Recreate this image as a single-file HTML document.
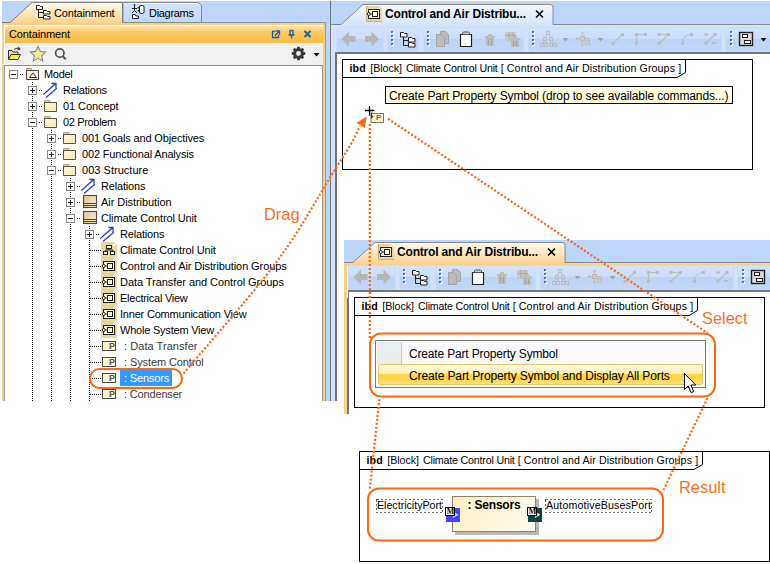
<!DOCTYPE html>
<html><head><meta charset="utf-8">
<style>
*{box-sizing:border-box;margin:0;padding:0}
html,body{width:770px;height:564px;overflow:hidden;background:#fff}
body{position:relative;font-family:"Liberation Sans",sans-serif;font-size:11px;color:#000}
.a{position:absolute}
.t{position:absolute;white-space:nowrap;line-height:16px;height:16px;font-size:11px}
.ui{font-family:"Liberation Sans",sans-serif}
.or{color:#f8701c;font-size:15px;line-height:18px;height:18px}
</style></head><body>
<!-- ============ LEFT PANEL ============ -->
<div class="a" style="left:2px;top:1px;width:328px;height:400px;background:#bcd6fb"></div>
<div class="a" style="left:330px;top:1px;width:1px;height:400px;background:#70767f"></div><div class="a" style="left:331px;top:1px;width:5px;height:400px;background:#d4e3fb"></div>
<div class="a" style="left:2px;top:22px;width:324px;height:1px;background:#8d9299"></div>
<!-- orange frame of containment panel -->
<div class="a" style="left:2px;top:23px;width:324px;height:378px;background:#f9cf86;border-right:1px solid #9a9a9a"></div>
<div class="a" style="left:4px;top:25px;width:319px;height:376px;background:#fff"></div>
<div class="a" style="left:5px;top:26px;width:318px;height:17px;background:linear-gradient(#fde6b6,#fbc965 35%,#fbc052 70%,#fabb48)"></div>
<div class="a" style="left:5px;top:43px;width:318px;height:22px;background:#f0f0f0"></div>
<div class="a" style="left:4px;top:65px;width:319px;height:336px;background:#fff;border-top:1px solid #8c8c8c;border-left:1px solid #9a9a9a;border-right:1px solid #9a9a9a"></div>
<svg class="a" style="left:0;top:0" width="340" height="70" viewBox="0 0 340 70">
<defs>
<linearGradient id="gt" x1="0" y1="0" x2="0" y2="1"><stop offset="0" stop-color="#fffaf0"/><stop offset="1" stop-color="#fbd48d"/></linearGradient>
<linearGradient id="gb" x1="0" y1="0" x2="0" y2="1"><stop offset="0" stop-color="#d2e3fc"/><stop offset="1" stop-color="#bfd8fb"/></linearGradient>
</defs>
<!-- diagrams tab -->
<path d="M123 22.500V2.500H198.500l3 3V22.500z" fill="url(#gb)" stroke="#8a8a8a"/><path d="M123.500 3.500l4 3M128 3.500H198" fill="none" stroke="#fff" stroke-width="1" opacity=".9"/>
<!-- containment tab -->
<path d="M2 22.5H10L32 2.5H122.5V23H2z" fill="url(#gt)"/>
<path d="M2 22.5H10L32 2.5H122.5V22.5" fill="none" stroke="#7f7f7f"/>
<!-- containment tab icon -->
<g fill="#fff" stroke="#222" stroke-width="1">
<path d="M36.500 5.500h3l1 1h2v3h-6zM43.500 10.500h3l1 1h2.500v2.500h-6.500zM43.500 15.500h3l1 1h2.500v2.500h-6.500z"/>
<path d="M38.500 9.500v8h5M38.500 12.500h5" fill="none"/>
</g>
<!-- diagrams tab icon -->
<g fill="none" stroke="#222" stroke-width="1">
<path d="M134.500 5.500v5M132 8.500h5M134.500 10.500l-2.500 2.500M134.500 10.500l2.500 2.500"/><circle cx="134.500" cy="4.800" r=".9" fill="#222" stroke="none"/>
<rect x="139.500" y="5.500" width="4.500" height="8" rx="1.500" fill="#fff"/>
<path d="M138.500 7v1.600M138.500 10v1.600" stroke-width="1.600"/>
<path d="M132.500 18.500v-4h2.500l1 1.500h2.500v2.500z" fill="#fff"/>
</g>
<!-- title icons -->
<g fill="none" stroke="#1f5fa8" stroke-width="1.300">
<path d="M275 31.500h-2.500v6h6V35M275.500 31h4v4M279 31.500l-4 4"/>
<path d="M289.500 30.500h4M290 31v4M293 31v4M288.500 35h6M291.500 35v3.500" stroke-width="1.400"/>
<path d="M304.500 31l6 6M310.500 31l-6 6" stroke-width="1.800"/>
</g>
<!-- toolbar icons -->
<g>
<path d="M8.500 59v-8.500h3.500l1 1.500h5v2.500" fill="#f3df5a" stroke="#333"/>
<path d="M8.500 59.500l2.500-5h9.500l-2.500 5z" fill="#f9ea4e" stroke="#333"/>
<path d="M14 49.500q3-2.500 6-.5M18 46.800l2.300 2.200-3 1" fill="none" stroke="#333" stroke-width="1"/>
<path d="M38 46.500l2.300 4.900 5.300.6-3.900 3.600 1 5.300-4.700-2.600-4.700 2.600 1-5.300-3.900-3.600 5.300-.6z" fill="#f4ee9a" stroke="#8a8a8a" stroke-width="1.100"/>
<circle cx="59.800" cy="53" r="4.200" fill="none" stroke="#555" stroke-width="1.700"/><path d="M62.800 56.200l3 3" stroke="#555" stroke-width="2"/>
</g>
<!-- gear -->
<g transform="translate(298.500,53.500)" fill="#3a3a3a">
<circle r="3.900" fill="none" stroke="#3a3a3a" stroke-width="3"/>
<g id="tooth"><rect x="-1.400" y="-6.700" width="2.800" height="2.500"/></g>
<use href="#tooth" transform="rotate(45)"/><use href="#tooth" transform="rotate(90)"/><use href="#tooth" transform="rotate(135)"/><use href="#tooth" transform="rotate(180)"/><use href="#tooth" transform="rotate(225)"/><use href="#tooth" transform="rotate(270)"/><use href="#tooth" transform="rotate(315)"/>
</g>
<path d="M313.500 53h6l-3 3.500z" fill="#111"/>
</svg>
<div class="t" style="left:54px;top:5px;letter-spacing:-0.17px">Containment</div>
<div class="t" style="left:149px;top:5px;letter-spacing:-0.3px">Diagrams</div>
<div class="t" style="left:9px;top:26px;letter-spacing:-0.12px">Containment</div>
<svg class="a" style="left:0;top:0" width="340" height="410" viewBox="0 0 340 410" shape-rendering="crispEdges"><defs><linearGradient id="pk" x1="0" y1="0" x2="1" y2="1"><stop offset="0" stop-color="#fefae4"/><stop offset="1" stop-color="#f7e9ae"/></linearGradient><linearGradient id="bk" x1="0" y1="0" x2="1" y2="0"><stop offset="0" stop-color="#dccb98"/><stop offset="1" stop-color="#f3e9c8"/></linearGradient></defs>
<path d="M32.5 82V401" stroke="#000" stroke-width="1" stroke-dasharray="1 1"/>
<path d="M51.5 130V401" stroke="#000" stroke-width="1" stroke-dasharray="1 1"/>
<path d="M70.5 178V401" stroke="#000" stroke-width="1" stroke-dasharray="1 1"/>
<path d="M89.5 226V401" stroke="#000" stroke-width="1" stroke-dasharray="1 1"/>
<rect x="9.5" y="70.5" width="8" height="8" fill="#fff" stroke="#8c8c8c"/>
<path d="M11 74.5h5" stroke="#222"/>
<path d="M20 74.5H24" stroke="#000" stroke-width="1" stroke-dasharray="1 1"/>
<g transform="translate(24,66)" shape-rendering="geometricPrecision"><path d="M2.500 4.500v-2h5v2z" fill="#f1c88e" stroke="#b89868" stroke-width="1"/><path d="M2.500 4.500h12v9h-12z" fill="#fdf5d2" stroke="#444" stroke-width="1"/><path d="M5.500 11.500l3.500-4.500 3.500 4.500z" fill="#fff" stroke="#333" stroke-width="1"/></g>
<rect x="28.5" y="86.5" width="8" height="8" fill="#fff" stroke="#8c8c8c"/>
<path d="M30 90.5h5" stroke="#222"/>
<path d="M32.5 88v5" stroke="#222"/>
<path d="M39 90.5H43" stroke="#000" stroke-width="1" stroke-dasharray="1 1"/>
<g transform="translate(43,82)" shape-rendering="geometricPrecision" stroke="#2a40c4" stroke-width="1.300" fill="none"><path d="M0.300 12.500L12.800 1.500M3 15.600L13.800 6.300M8.300 1.500h4.700v4.700"/></g>
<rect x="28.5" y="102.5" width="8" height="8" fill="#fff" stroke="#8c8c8c"/>
<path d="M30 106.5h5" stroke="#222"/>
<path d="M32.5 104v5" stroke="#222"/>
<path d="M39 106.5H43" stroke="#000" stroke-width="1" stroke-dasharray="1 1"/>
<g transform="translate(43,98)" shape-rendering="geometricPrecision"><path d="M1.500 4.500v-2h5.500v2z" fill="#f1c88e" stroke="#c0a070" stroke-width="1"/><path d="M1.500 4.500h12v9h-12z" fill="url(#pk)" stroke="#55554a" stroke-width="1"/></g>
<rect x="28.5" y="118.5" width="8" height="8" fill="#fff" stroke="#8c8c8c"/>
<path d="M30 122.5h5" stroke="#222"/>
<path d="M39 122.5H43" stroke="#000" stroke-width="1" stroke-dasharray="1 1"/>
<g transform="translate(43,114)" shape-rendering="geometricPrecision"><path d="M1.500 4.500v-2h5.500v2z" fill="#f1c88e" stroke="#c0a070" stroke-width="1"/><path d="M1.500 4.500h12v9h-12z" fill="url(#pk)" stroke="#55554a" stroke-width="1"/></g>
<rect x="47.5" y="134.5" width="8" height="8" fill="#fff" stroke="#8c8c8c"/>
<path d="M49 138.5h5" stroke="#222"/>
<path d="M51.5 136v5" stroke="#222"/>
<path d="M58 138.5H62" stroke="#000" stroke-width="1" stroke-dasharray="1 1"/>
<g transform="translate(62,130)" shape-rendering="geometricPrecision"><path d="M1.500 4.500v-2h5.500v2z" fill="#f1c88e" stroke="#c0a070" stroke-width="1"/><path d="M1.500 4.500h12v9h-12z" fill="url(#pk)" stroke="#55554a" stroke-width="1"/></g>
<rect x="47.5" y="150.5" width="8" height="8" fill="#fff" stroke="#8c8c8c"/>
<path d="M49 154.5h5" stroke="#222"/>
<path d="M51.5 152v5" stroke="#222"/>
<path d="M58 154.5H62" stroke="#000" stroke-width="1" stroke-dasharray="1 1"/>
<g transform="translate(62,146)" shape-rendering="geometricPrecision"><path d="M1.500 4.500v-2h5.500v2z" fill="#f1c88e" stroke="#c0a070" stroke-width="1"/><path d="M1.500 4.500h12v9h-12z" fill="url(#pk)" stroke="#55554a" stroke-width="1"/></g>
<rect x="47.5" y="166.5" width="8" height="8" fill="#fff" stroke="#8c8c8c"/>
<path d="M49 170.5h5" stroke="#222"/>
<path d="M58 170.5H62" stroke="#000" stroke-width="1" stroke-dasharray="1 1"/>
<g transform="translate(62,162)" shape-rendering="geometricPrecision"><path d="M1.500 4.500v-2h5.500v2z" fill="#f1c88e" stroke="#c0a070" stroke-width="1"/><path d="M1.500 4.500h12v9h-12z" fill="url(#pk)" stroke="#55554a" stroke-width="1"/></g>
<rect x="66.5" y="182.5" width="8" height="8" fill="#fff" stroke="#8c8c8c"/>
<path d="M68 186.5h5" stroke="#222"/>
<path d="M70.5 184v5" stroke="#222"/>
<path d="M77 186.5H81" stroke="#000" stroke-width="1" stroke-dasharray="1 1"/>
<g transform="translate(81,178)" shape-rendering="geometricPrecision" stroke="#2a40c4" stroke-width="1.300" fill="none"><path d="M0.300 12.500L12.800 1.500M3 15.600L13.800 6.300M8.300 1.500h4.700v4.700"/></g>
<rect x="66.5" y="198.5" width="8" height="8" fill="#fff" stroke="#8c8c8c"/>
<path d="M68 202.5h5" stroke="#222"/>
<path d="M70.5 200v5" stroke="#222"/>
<path d="M77 202.5H81" stroke="#000" stroke-width="1" stroke-dasharray="1 1"/>
<g transform="translate(82,194)" shape-rendering="geometricPrecision"><rect x="1.500" y="1.500" width="13" height="12" fill="url(#bk)" stroke="#4f4f48" stroke-width="1.200"/><path d="M2 9.500h12M2 11.500h12" stroke="#4f4f48" stroke-width="1"/></g>
<rect x="66.5" y="214.5" width="8" height="8" fill="#fff" stroke="#8c8c8c"/>
<path d="M68 218.5h5" stroke="#222"/>
<path d="M77 218.5H81" stroke="#000" stroke-width="1" stroke-dasharray="1 1"/>
<g transform="translate(82,210)" shape-rendering="geometricPrecision"><rect x="1.500" y="1.500" width="13" height="12" fill="url(#bk)" stroke="#4f4f48" stroke-width="1.200"/><path d="M2 9.500h12M2 11.500h12" stroke="#4f4f48" stroke-width="1"/></g>
<rect x="85.5" y="230.5" width="8" height="8" fill="#fff" stroke="#8c8c8c"/>
<path d="M87 234.5h5" stroke="#222"/>
<path d="M89.5 232v5" stroke="#222"/>
<path d="M96 234.5H100" stroke="#000" stroke-width="1" stroke-dasharray="1 1"/>
<g transform="translate(100,226)" shape-rendering="geometricPrecision" stroke="#2a40c4" stroke-width="1.300" fill="none"><path d="M0.300 12.500L12.800 1.500M3 15.600L13.800 6.300M8.300 1.500h4.700v4.700"/></g>
<path d="M90 250.5H102" stroke="#000" stroke-width="1" stroke-dasharray="1 1"/>
<g transform="translate(101,242)" shape-rendering="geometricPrecision"><path d="M0 0h12l4 4v12h-16z" fill="#e6d6a0"/><path d="M12 0v4h4z" fill="#fff"/><path d="M12 0l4 4" stroke="#c9b98a" stroke-width=".8"/><g fill="#fdf8dc" stroke="#222" stroke-width="1"><rect x="5.500" y="3.500" width="5" height="3"/><rect x="2.500" y="9.500" width="4" height="3"/><rect x="9.500" y="9.500" width="4" height="3"/></g><path d="M8 6.500v1.500M4.500 9.500v-1.500h7v1.500" stroke="#222" fill="none"/></g>
<path d="M90 266.5H102" stroke="#000" stroke-width="1" stroke-dasharray="1 1"/>
<g transform="translate(101,258)" shape-rendering="geometricPrecision"><path d="M0 0h12l4 4v12h-16z" fill="#e6d6a0"/><path d="M12 0v4h4z" fill="#fff"/><path d="M12 0l4 4" stroke="#c9b98a" stroke-width=".8"/><rect x="2.500" y="3.500" width="11" height="9" fill="#fdf6c8" stroke="#222"/><rect x="6.500" y="5.500" width="5" height="5" fill="#fff" stroke="#222"/><circle cx="2.800" cy="8" r="1.500" fill="#fff" stroke="#222"/><path d="M4.300 8h2.200" stroke="#222"/></g>
<path d="M90 282.5H102" stroke="#000" stroke-width="1" stroke-dasharray="1 1"/>
<g transform="translate(101,274)" shape-rendering="geometricPrecision"><path d="M0 0h12l4 4v12h-16z" fill="#e6d6a0"/><path d="M12 0v4h4z" fill="#fff"/><path d="M12 0l4 4" stroke="#c9b98a" stroke-width=".8"/><rect x="2.500" y="3.500" width="11" height="9" fill="#fdf6c8" stroke="#222"/><rect x="6.500" y="5.500" width="5" height="5" fill="#fff" stroke="#222"/><circle cx="2.800" cy="8" r="1.500" fill="#fff" stroke="#222"/><path d="M4.300 8h2.200" stroke="#222"/></g>
<path d="M90 298.5H102" stroke="#000" stroke-width="1" stroke-dasharray="1 1"/>
<g transform="translate(101,290)" shape-rendering="geometricPrecision"><path d="M0 0h12l4 4v12h-16z" fill="#e6d6a0"/><path d="M12 0v4h4z" fill="#fff"/><path d="M12 0l4 4" stroke="#c9b98a" stroke-width=".8"/><rect x="2.500" y="3.500" width="11" height="9" fill="#fdf6c8" stroke="#222"/><rect x="6.500" y="5.500" width="5" height="5" fill="#fff" stroke="#222"/><circle cx="2.800" cy="8" r="1.500" fill="#fff" stroke="#222"/><path d="M4.300 8h2.200" stroke="#222"/></g>
<path d="M90 314.5H102" stroke="#000" stroke-width="1" stroke-dasharray="1 1"/>
<g transform="translate(101,306)" shape-rendering="geometricPrecision"><path d="M0 0h12l4 4v12h-16z" fill="#e6d6a0"/><path d="M12 0v4h4z" fill="#fff"/><path d="M12 0l4 4" stroke="#c9b98a" stroke-width=".8"/><rect x="2.500" y="3.500" width="11" height="9" fill="#fdf6c8" stroke="#222"/><rect x="6.500" y="5.500" width="5" height="5" fill="#fff" stroke="#222"/><circle cx="2.800" cy="8" r="1.500" fill="#fff" stroke="#222"/><path d="M4.300 8h2.200" stroke="#222"/></g>
<path d="M90 330.5H102" stroke="#000" stroke-width="1" stroke-dasharray="1 1"/>
<g transform="translate(101,322)" shape-rendering="geometricPrecision"><path d="M0 0h12l4 4v12h-16z" fill="#e6d6a0"/><path d="M12 0v4h4z" fill="#fff"/><path d="M12 0l4 4" stroke="#c9b98a" stroke-width=".8"/><rect x="2.500" y="3.500" width="11" height="9" fill="#fdf6c8" stroke="#222"/><rect x="6.500" y="5.500" width="5" height="5" fill="#fff" stroke="#222"/><circle cx="2.800" cy="8" r="1.500" fill="#fff" stroke="#222"/><path d="M4.300 8h2.200" stroke="#222"/></g>
<path d="M90 346.5H102" stroke="#000" stroke-width="1" stroke-dasharray="1 1"/>
<g transform="translate(100,338)" shape-rendering="geometricPrecision"><rect x="2.500" y="3.500" width="13" height="9" fill="#fdf6d0" stroke="#4a4a42"/></g>
<path d="M90 362.5H102" stroke="#000" stroke-width="1" stroke-dasharray="1 1"/>
<g transform="translate(100,354)" shape-rendering="geometricPrecision"><rect x="2.500" y="3.500" width="13" height="9" fill="#fdf6d0" stroke="#4a4a42"/></g>
<path d="M90 378.5H102" stroke="#000" stroke-width="1" stroke-dasharray="1 1"/>
<g transform="translate(100,370)" shape-rendering="geometricPrecision"><rect x="2.500" y="3.500" width="13" height="9" fill="#fdf6d0" stroke="#4a4a42"/></g>
<path d="M90 394.5H102" stroke="#000" stroke-width="1" stroke-dasharray="1 1"/>
<g transform="translate(100,386)" shape-rendering="geometricPrecision"><rect x="2.500" y="3.500" width="13" height="9" fill="#fdf6d0" stroke="#4a4a42"/></g>
</svg>
<div class="t" style="left:44px;top:66px;letter-spacing:-0.292px">Model</div>
<div class="t" style="left:63px;top:82px;letter-spacing:-0.22px">Relations</div>
<div class="t" style="left:63px;top:98px;letter-spacing:-0.085px">01 Concept</div>
<div class="t" style="left:63px;top:114px;letter-spacing:-0.341px">02 Problem</div>
<div class="t" style="left:82px;top:130px;letter-spacing:-0.16px">001 Goals and Objectives</div>
<div class="t" style="left:82px;top:146px;letter-spacing:-0.158px">002 Functional Analysis</div>
<div class="t" style="left:82px;top:162px;letter-spacing:0.029px">003 Structure</div>
<div class="t" style="left:101px;top:178px;letter-spacing:-0.182px">Relations</div>
<div class="t" style="left:101px;top:194px;letter-spacing:-0.062px">Air Distribution</div>
<div class="t" style="left:101px;top:210px;letter-spacing:-0.138px">Climate Control Unit</div>
<div class="t" style="left:120px;top:226px;letter-spacing:-0.182px">Relations</div>
<div class="t" style="left:120px;top:242px;letter-spacing:-0.138px">Climate Control Unit</div>
<div class="t" style="left:120px;top:258px;letter-spacing:-0.096px">Control and Air Distribution Groups</div>
<div class="t" style="left:120px;top:274px;letter-spacing:-0.058px">Data Transfer and Control Groups</div>
<div class="t" style="left:120px;top:290px;letter-spacing:-0.252px">Electrical View</div>
<div class="t" style="left:120px;top:306px;letter-spacing:-0.198px">Inner Communication View</div>
<div class="t" style="left:120px;top:322px;letter-spacing:-0.213px">Whole System View</div>
<div class="t" style="left:109px;top:338px;font-size:9px;font-weight:bold;color:#555">P</div>
<div class="t" style="left:124px;top:338px;color:#3a3a3a;letter-spacing:0.052px">: Data Transfer</div>
<div class="t" style="left:109px;top:354px;font-size:9px;font-weight:bold;color:#555">P</div>
<div class="t" style="left:124px;top:354px;color:#3a3a3a;letter-spacing:-0.101px">: System Control</div>
<div class="t" style="left:109px;top:370px;font-size:9px;font-weight:bold;color:#555">P</div>
<div class="t" style="left:120px;top:374px;width:52px;height:16px;line-height:16px;margin-top:-4px;background:#3399ff;color:#fff;padding-left:4px;letter-spacing:-0.146px">: Sensors</div>
<div class="t" style="left:109px;top:386px;font-size:9px;font-weight:bold;color:#555">P</div>
<div class="t" style="left:124px;top:386px;color:#3a3a3a;letter-spacing:-0.164px">: Condenser</div>
<!-- ============ WINDOW 1 ============ -->
<div class="a" style="left:335px;top:52px;width:435px;height:349px;border-left:2px solid #73737b;background:#fff"></div>
<svg class="a" style="left:0px;top:0px" width="770" height="60" viewBox="0 0 770 60">
<defs><linearGradient id="tbga" x1="0" y1="0" x2="0" y2="1"><stop offset="0" stop-color="#d3e3fb"/><stop offset=".48" stop-color="#cbddf9"/><stop offset=".5" stop-color="#bdd3f5"/><stop offset="1" stop-color="#c3d8f8"/></linearGradient>
<linearGradient id="taba" x1="0" y1="0" x2="0" y2="1"><stop offset="0" stop-color="#f4f8fe"/><stop offset="1" stop-color="#d3e2fb"/></linearGradient>
</defs>
<rect x="331" y="1" width="770" height="24" fill="#bcd6fb"/>
<rect x="331" y="24" width="770" height="3" fill="#d3e2fb"/>
<rect x="331" y="26" width="770" height="26" fill="#d3e2fb"/>
<path d="M331 24.500H341L363 4.500H550q3 0 3 3V24.500H770V26H331z" fill="url(#taba)"/>
<path d="M331 24.500H341L363 4.500H550q3 0 3 3V24.500H770" fill="none" stroke="#8a8a8a"/>
<rect x="336.5" y="27.500" width="47" height="24" rx="2" fill="url(#tbga)" stroke="#c9dcfb" stroke-width="1"/>
<rect x="387.5" y="27.500" width="31" height="24" rx="2" fill="url(#tbga)" stroke="#c9dcfb" stroke-width="1"/>
<rect x="423.5" y="27.500" width="100" height="24" rx="2" fill="url(#tbga)" stroke="#c9dcfb" stroke-width="1"/>
<rect x="528.5" y="27.500" width="193" height="24" rx="2" fill="url(#tbga)" stroke="#c9dcfb" stroke-width="1"/>
<rect x="725.5" y="27.500" width="55" height="24" rx="2" fill="url(#tbga)" stroke="#c9dcfb" stroke-width="1"/>
<path d="M341.500 39l7.500-7.500v4.500h6.500v6h-6.500v4.500z" fill="#b6b6b6"/><path d="M379 39l-7.500-7.500v4.500h-6.500v6h6.500v4.500z" fill="#b6b6b6"/><rect x="391" y="31" width="2" height="2" fill="#3f74c8"/><rect x="392" y="32" width="2" height="2" fill="#fff" opacity=".9"/><rect x="391" y="31" width="2" height="2" fill="#3f74c8" opacity=".85"/><rect x="391" y="35" width="2" height="2" fill="#3f74c8"/><rect x="392" y="36" width="2" height="2" fill="#fff" opacity=".9"/><rect x="391" y="35" width="2" height="2" fill="#3f74c8" opacity=".85"/><rect x="391" y="39" width="2" height="2" fill="#3f74c8"/><rect x="392" y="40" width="2" height="2" fill="#fff" opacity=".9"/><rect x="391" y="39" width="2" height="2" fill="#3f74c8" opacity=".85"/><rect x="391" y="43" width="2" height="2" fill="#3f74c8"/><rect x="392" y="44" width="2" height="2" fill="#fff" opacity=".9"/><rect x="391" y="43" width="2" height="2" fill="#3f74c8" opacity=".85"/><g fill="#fff" stroke="#222" stroke-width="1"><path d="M400.500 32.500h3l1 1h2.500v3.500h-6.500zM408.500 37.500h3l1 1h2.500v3.500h-6.500zM408.500 42.500h3l1 1h2.500v3.500h-6.500z"/><path d="M403.500 37v8.500h5M403.500 40.500h5" fill="none"/></g><rect x="427" y="31" width="2" height="2" fill="#3f74c8"/><rect x="428" y="32" width="2" height="2" fill="#fff" opacity=".9"/><rect x="427" y="31" width="2" height="2" fill="#3f74c8" opacity=".85"/><rect x="427" y="35" width="2" height="2" fill="#3f74c8"/><rect x="428" y="36" width="2" height="2" fill="#fff" opacity=".9"/><rect x="427" y="35" width="2" height="2" fill="#3f74c8" opacity=".85"/><rect x="427" y="39" width="2" height="2" fill="#3f74c8"/><rect x="428" y="40" width="2" height="2" fill="#fff" opacity=".9"/><rect x="427" y="39" width="2" height="2" fill="#3f74c8" opacity=".85"/><rect x="427" y="43" width="2" height="2" fill="#3f74c8"/><rect x="428" y="44" width="2" height="2" fill="#fff" opacity=".9"/><rect x="427" y="43" width="2" height="2" fill="#3f74c8" opacity=".85"/><g fill="#bcbcbc" stroke="#a5a5a5" stroke-width="1"><path d="M440.500 31.500h5l3 3v9h-8z"/><path d="M436.500 34.500h5l3 3v9h-8z"/></g><path d="M460.500 34.500h11v12h-11z" fill="#fff" stroke="#222" stroke-width="1.200"/><path d="M462.500 34.500v-1.500l1-1h5l1 1v1.500z" fill="#c9c9e6" stroke="#555" stroke-width="1"/><path d="M485 36h10v2h-1v8h-8v-8h-1zM488 34h4v2h-4z" fill="#bcbcbc"/><path d="M488.500 39v6M491.500 39v6" stroke="#a0a0a0"/><path d="M505 32h11v9h-11z" fill="#c8c8c8"/><path d="M505 35.500h11M509 32v9M513 32v9" stroke="#aaa" stroke-width="1"/><path d="M510 38h10v2h-1v7h-8v-7h-1zM513 36h4v2h-4z" fill="#bcbcbc"/><path d="M513.500 41v5M516.500 41v5" stroke="#a0a0a0"/><rect x="532" y="31" width="2" height="2" fill="#3f74c8"/><rect x="533" y="32" width="2" height="2" fill="#fff" opacity=".9"/><rect x="532" y="31" width="2" height="2" fill="#3f74c8" opacity=".85"/><rect x="532" y="35" width="2" height="2" fill="#3f74c8"/><rect x="533" y="36" width="2" height="2" fill="#fff" opacity=".9"/><rect x="532" y="35" width="2" height="2" fill="#3f74c8" opacity=".85"/><rect x="532" y="39" width="2" height="2" fill="#3f74c8"/><rect x="533" y="40" width="2" height="2" fill="#fff" opacity=".9"/><rect x="532" y="39" width="2" height="2" fill="#3f74c8" opacity=".85"/><rect x="532" y="43" width="2" height="2" fill="#3f74c8"/><rect x="533" y="44" width="2" height="2" fill="#fff" opacity=".9"/><rect x="532" y="43" width="2" height="2" fill="#3f74c8" opacity=".85"/><g fill="none" stroke="#bcbcbc" stroke-width="1"><rect x="546.500" y="31.500" width="3" height="3"/><rect x="543.500" y="37.500" width="3" height="3"/><rect x="549.500" y="37.500" width="3" height="3"/><rect x="540.500" y="43.500" width="3" height="3"/><rect x="544.500" y="43.500" width="3" height="3"/><rect x="549.500" y="43.500" width="3" height="3"/><rect x="553.500" y="43.500" width="3" height="3"/><path d="M547 34.500l-2 3M549 34.500l2 3M544 40.500l-2 3M546 40.500v3M550.500 40.500v3M552 40.500l2.500 3"/></g><path d="M562.500 38h6l-3 3.500z" fill="#a8a39c"/><g fill="none" stroke="#bcbcbc" stroke-width="1"><path d="M582.500 32v14M576 38.500h14M581 33.500l1.500-1.500 1.500 1.500M581 44.500l1.500 1.500 1.500-1.500M577.500 37l-1.500 1.500 1.500 1.500"/><rect x="580.500" y="36.500" width="4" height="4" fill="#cfcfcf"/><rect x="585.500" y="40.500" width="4" height="4" fill="#cfcfcf"/></g><path d="M597.500 38h6l-3 3.500z" fill="#a8a39c"/><path d="M613 43.500L622.500 34.500" fill="none" stroke="#bcbcbc" stroke-width="1.200"/><rect x="611.5" y="42" width="3" height="3" fill="#bcbcbc" stroke="none"/><rect x="621" y="33" width="3" height="3" fill="#bcbcbc" stroke="none"/><path d="M636.500 43.500V34.500H645.500" fill="none" stroke="#bcbcbc" stroke-width="1.200"/><rect x="635" y="42" width="3" height="3" fill="#bcbcbc" stroke="none"/><rect x="635" y="33" width="3" height="3" fill="#bcbcbc" stroke="none"/><rect x="644" y="33" width="3" height="3" fill="#bcbcbc" stroke="none"/><path d="M659 34.500H668.500L659 43.500" fill="none" stroke="#bcbcbc" stroke-width="1.200"/><rect x="657.5" y="33" width="3" height="3" fill="#bcbcbc" stroke="none"/><rect x="667" y="33" width="3" height="3" fill="#bcbcbc" stroke="none"/><rect x="657.5" y="42" width="3" height="3" fill="#bcbcbc" stroke="none"/><path d="M682.500 43.500C682.500 38 686 34.500 691.500 34.500" fill="none" stroke="#bcbcbc" stroke-width="1.200"/><rect x="681" y="42" width="3" height="3" fill="#bcbcbc" stroke="none"/><rect x="690" y="33" width="3" height="3" fill="#bcbcbc" stroke="none"/><g fill="#bcbcbc" stroke="#bcbcbc" stroke-width="1.200"><path d="M706 43l9-8.700" fill="none"/><rect x="713.500" y="33" width="3" height="3" stroke="none"/><rect x="704.500" y="41.500" width="3" height="3" stroke="none"/><rect x="704" y="33.500" width="4" height="2" stroke="none"/><rect x="712" y="42" width="4" height="2" stroke="none"/></g><rect x="730" y="31" width="2" height="2" fill="#3f74c8"/><rect x="731" y="32" width="2" height="2" fill="#fff" opacity=".9"/><rect x="730" y="31" width="2" height="2" fill="#3f74c8" opacity=".85"/><rect x="730" y="35" width="2" height="2" fill="#3f74c8"/><rect x="731" y="36" width="2" height="2" fill="#fff" opacity=".9"/><rect x="730" y="35" width="2" height="2" fill="#3f74c8" opacity=".85"/><rect x="730" y="39" width="2" height="2" fill="#3f74c8"/><rect x="731" y="40" width="2" height="2" fill="#fff" opacity=".9"/><rect x="730" y="39" width="2" height="2" fill="#3f74c8" opacity=".85"/><rect x="730" y="43" width="2" height="2" fill="#3f74c8"/><rect x="731" y="44" width="2" height="2" fill="#fff" opacity=".9"/><rect x="730" y="43" width="2" height="2" fill="#3f74c8" opacity=".85"/><rect x="739.500" y="32.500" width="13" height="13" fill="#d8d8d8" stroke="#222" stroke-width="1.400"/><rect x="742.500" y="34.500" width="5" height="3" fill="#fff" stroke="#222"/><rect x="744.500" y="40.500" width="6" height="3" fill="#fff" stroke="#222"/><path d="M760.500 38h6l-3 3.500z" fill="#111"/>
<g transform="translate(366,6)"><path d="M0 0h12l4 4v12h-16z" fill="#e6d6a0"/><path d="M12 0v4h4z" fill="#fff"/><path d="M12 0l4 4" stroke="#c9b98a" stroke-width=".8"/><path d="M.5 0v15.500h15.500" fill="none" stroke="#c4b27e"/><rect x="2.500" y="3.500" width="11" height="9" fill="#fdf6c8" stroke="#222"/><rect x="6.500" y="5.500" width="5" height="5" fill="#fff" stroke="#222"/><circle cx="2.800" cy="8" r="1.500" fill="#fff" stroke="#222"/><path d="M4.300 8h2.200" stroke="#222"/></g>
<path d="M536 10.500l7 7M543 10.500l-7 7" stroke="#111" stroke-width="1.700"/>
<rect x="335" y="52" width="770" height="2" fill="#73737b"/>
</svg>
<div class="t" style="left:385px;top:6px;font-size:12px;font-weight:bold;letter-spacing:-0.175px">Control and Air Distribu...</div>
<div class="a" style="left:342px;top:59px;width:411px;height:111px;border:1px solid #000"></div>
<svg class="a" style="left:342px;top:59px" width="345" height="20" viewBox="0 0 345 20"><path d="M0 18.500H335L343.5 13.500V0" fill="none" stroke="#000"/></svg>
<div class="t" style="left:349.5px;top:60px;font-size:10.670px;letter-spacing:0.108px"><b>ibd</b></div>
<div class="t" style="left:370.3px;top:60px;font-size:10.670px;letter-spacing:-0.064px">[Block]</div>
<div class="t" style="left:406px;top:60px;font-size:10.670px;letter-spacing:-0.187px">Climate Control Unit</div>
<div class="t" style="left:500.7px;top:60px;font-size:10.670px;letter-spacing:0.103px">[ Control and Air Distribution Groups ]</div>
<div class="a" style="left:385px;top:86px;width:348px;height:18px;background:#ffffe1;border:1px solid #000"></div>
<div class="t" style="left:389px;top:88px;font-size:12px;letter-spacing:-0.13px">Create Part Property Symbol (drop to see available commands...)</div>
<!-- ============ WINDOW 2 ============ -->
<div class="a" style="left:344px;top:240px;width:426px;height:174px;background:#fff"></div>
<div class="a" style="left:344px;top:263px;width:3px;height:151px;background:#f9cf86"></div>
<div class="a" style="left:347px;top:290px;width:2px;height:124px;background:#73737b"></div>
<svg class="a" style="left:12px;top:238px" width="758" height="60" viewBox="0 0 758 60">
<defs><linearGradient id="tbgb" x1="0" y1="0" x2="0" y2="1"><stop offset="0" stop-color="#d3e3fb"/><stop offset=".48" stop-color="#cbddf9"/><stop offset=".5" stop-color="#bdd3f5"/><stop offset="1" stop-color="#c3d8f8"/></linearGradient>
<linearGradient id="tabb" x1="0" y1="0" x2="0" y2="1"><stop offset="0" stop-color="#fffaf0"/><stop offset="1" stop-color="#fbd490"/></linearGradient>
</defs>
<rect x="332" y="2" width="770" height="24" fill="#bcd6fb"/>
<rect x="332" y="24" width="770" height="3" fill="#fbd08a"/>
<rect x="332" y="27" width="770" height="26" fill="#d3e2fb"/>
<path d="M332 24.500H341L363 4.500H550q3 0 3 3V24.500H770V26H332z" fill="url(#tabb)"/>
<path d="M332 24.500H341L363 4.500H550q3 0 3 3V24.500H770" fill="none" stroke="#8a8a8a"/>
<rect x="332" y="25" width="3" height="35" fill="#f9cf86"/><rect x="335" y="28" width="1" height="32" fill="#fff"/>
<rect x="336.5" y="27.500" width="47" height="24" rx="2" fill="url(#tbgb)" stroke="#c9dcfb" stroke-width="1"/>
<rect x="387.5" y="27.500" width="31" height="24" rx="2" fill="url(#tbgb)" stroke="#c9dcfb" stroke-width="1"/>
<rect x="423.5" y="27.500" width="100" height="24" rx="2" fill="url(#tbgb)" stroke="#c9dcfb" stroke-width="1"/>
<rect x="528.5" y="27.500" width="193" height="24" rx="2" fill="url(#tbgb)" stroke="#c9dcfb" stroke-width="1"/>
<rect x="725.5" y="27.500" width="55" height="24" rx="2" fill="url(#tbgb)" stroke="#c9dcfb" stroke-width="1"/>
<path d="M341.500 39l7.500-7.500v4.500h6.500v6h-6.500v4.500z" fill="#b6b6b6"/><path d="M379 39l-7.500-7.500v4.500h-6.500v6h6.500v4.500z" fill="#b6b6b6"/><rect x="391" y="31" width="2" height="2" fill="#3f74c8"/><rect x="392" y="32" width="2" height="2" fill="#fff" opacity=".9"/><rect x="391" y="31" width="2" height="2" fill="#3f74c8" opacity=".85"/><rect x="391" y="35" width="2" height="2" fill="#3f74c8"/><rect x="392" y="36" width="2" height="2" fill="#fff" opacity=".9"/><rect x="391" y="35" width="2" height="2" fill="#3f74c8" opacity=".85"/><rect x="391" y="39" width="2" height="2" fill="#3f74c8"/><rect x="392" y="40" width="2" height="2" fill="#fff" opacity=".9"/><rect x="391" y="39" width="2" height="2" fill="#3f74c8" opacity=".85"/><rect x="391" y="43" width="2" height="2" fill="#3f74c8"/><rect x="392" y="44" width="2" height="2" fill="#fff" opacity=".9"/><rect x="391" y="43" width="2" height="2" fill="#3f74c8" opacity=".85"/><g fill="#fff" stroke="#222" stroke-width="1"><path d="M400.500 32.500h3l1 1h2.500v3.500h-6.500zM408.500 37.500h3l1 1h2.500v3.500h-6.500zM408.500 42.500h3l1 1h2.500v3.500h-6.500z"/><path d="M403.500 37v8.500h5M403.500 40.500h5" fill="none"/></g><rect x="427" y="31" width="2" height="2" fill="#3f74c8"/><rect x="428" y="32" width="2" height="2" fill="#fff" opacity=".9"/><rect x="427" y="31" width="2" height="2" fill="#3f74c8" opacity=".85"/><rect x="427" y="35" width="2" height="2" fill="#3f74c8"/><rect x="428" y="36" width="2" height="2" fill="#fff" opacity=".9"/><rect x="427" y="35" width="2" height="2" fill="#3f74c8" opacity=".85"/><rect x="427" y="39" width="2" height="2" fill="#3f74c8"/><rect x="428" y="40" width="2" height="2" fill="#fff" opacity=".9"/><rect x="427" y="39" width="2" height="2" fill="#3f74c8" opacity=".85"/><rect x="427" y="43" width="2" height="2" fill="#3f74c8"/><rect x="428" y="44" width="2" height="2" fill="#fff" opacity=".9"/><rect x="427" y="43" width="2" height="2" fill="#3f74c8" opacity=".85"/><g fill="#bcbcbc" stroke="#a5a5a5" stroke-width="1"><path d="M440.500 31.500h5l3 3v9h-8z"/><path d="M436.500 34.500h5l3 3v9h-8z"/></g><path d="M460.500 34.500h11v12h-11z" fill="#fff" stroke="#222" stroke-width="1.200"/><path d="M462.500 34.500v-1.500l1-1h5l1 1v1.500z" fill="#c9c9e6" stroke="#555" stroke-width="1"/><path d="M485 36h10v2h-1v8h-8v-8h-1zM488 34h4v2h-4z" fill="#bcbcbc"/><path d="M488.500 39v6M491.500 39v6" stroke="#a0a0a0"/><path d="M505 32h11v9h-11z" fill="#c8c8c8"/><path d="M505 35.500h11M509 32v9M513 32v9" stroke="#aaa" stroke-width="1"/><path d="M510 38h10v2h-1v7h-8v-7h-1zM513 36h4v2h-4z" fill="#bcbcbc"/><path d="M513.500 41v5M516.500 41v5" stroke="#a0a0a0"/><rect x="532" y="31" width="2" height="2" fill="#3f74c8"/><rect x="533" y="32" width="2" height="2" fill="#fff" opacity=".9"/><rect x="532" y="31" width="2" height="2" fill="#3f74c8" opacity=".85"/><rect x="532" y="35" width="2" height="2" fill="#3f74c8"/><rect x="533" y="36" width="2" height="2" fill="#fff" opacity=".9"/><rect x="532" y="35" width="2" height="2" fill="#3f74c8" opacity=".85"/><rect x="532" y="39" width="2" height="2" fill="#3f74c8"/><rect x="533" y="40" width="2" height="2" fill="#fff" opacity=".9"/><rect x="532" y="39" width="2" height="2" fill="#3f74c8" opacity=".85"/><rect x="532" y="43" width="2" height="2" fill="#3f74c8"/><rect x="533" y="44" width="2" height="2" fill="#fff" opacity=".9"/><rect x="532" y="43" width="2" height="2" fill="#3f74c8" opacity=".85"/><g fill="none" stroke="#bcbcbc" stroke-width="1"><rect x="546.500" y="31.500" width="3" height="3"/><rect x="543.500" y="37.500" width="3" height="3"/><rect x="549.500" y="37.500" width="3" height="3"/><rect x="540.500" y="43.500" width="3" height="3"/><rect x="544.500" y="43.500" width="3" height="3"/><rect x="549.500" y="43.500" width="3" height="3"/><rect x="553.500" y="43.500" width="3" height="3"/><path d="M547 34.500l-2 3M549 34.500l2 3M544 40.500l-2 3M546 40.500v3M550.500 40.500v3M552 40.500l2.500 3"/></g><path d="M562.500 38h6l-3 3.500z" fill="#a8a39c"/><g fill="none" stroke="#bcbcbc" stroke-width="1"><path d="M582.500 32v14M576 38.500h14M581 33.500l1.500-1.500 1.500 1.500M581 44.500l1.500 1.500 1.500-1.500M577.500 37l-1.500 1.500 1.500 1.500"/><rect x="580.500" y="36.500" width="4" height="4" fill="#cfcfcf"/><rect x="585.500" y="40.500" width="4" height="4" fill="#cfcfcf"/></g><path d="M597.500 38h6l-3 3.500z" fill="#a8a39c"/><path d="M613 43.500L622.500 34.500" fill="none" stroke="#bcbcbc" stroke-width="1.200"/><rect x="611.5" y="42" width="3" height="3" fill="#bcbcbc" stroke="none"/><rect x="621" y="33" width="3" height="3" fill="#bcbcbc" stroke="none"/><path d="M636.500 43.500V34.500H645.500" fill="none" stroke="#bcbcbc" stroke-width="1.200"/><rect x="635" y="42" width="3" height="3" fill="#bcbcbc" stroke="none"/><rect x="635" y="33" width="3" height="3" fill="#bcbcbc" stroke="none"/><rect x="644" y="33" width="3" height="3" fill="#bcbcbc" stroke="none"/><path d="M659 34.500H668.500L659 43.500" fill="none" stroke="#bcbcbc" stroke-width="1.200"/><rect x="657.5" y="33" width="3" height="3" fill="#bcbcbc" stroke="none"/><rect x="667" y="33" width="3" height="3" fill="#bcbcbc" stroke="none"/><rect x="657.5" y="42" width="3" height="3" fill="#bcbcbc" stroke="none"/><path d="M682.500 43.500C682.500 38 686 34.500 691.500 34.500" fill="none" stroke="#bcbcbc" stroke-width="1.200"/><rect x="681" y="42" width="3" height="3" fill="#bcbcbc" stroke="none"/><rect x="690" y="33" width="3" height="3" fill="#bcbcbc" stroke="none"/><g fill="#bcbcbc" stroke="#bcbcbc" stroke-width="1.200"><path d="M706 43l9-8.700" fill="none"/><rect x="713.500" y="33" width="3" height="3" stroke="none"/><rect x="704.500" y="41.500" width="3" height="3" stroke="none"/><rect x="704" y="33.500" width="4" height="2" stroke="none"/><rect x="712" y="42" width="4" height="2" stroke="none"/></g><rect x="730" y="31" width="2" height="2" fill="#3f74c8"/><rect x="731" y="32" width="2" height="2" fill="#fff" opacity=".9"/><rect x="730" y="31" width="2" height="2" fill="#3f74c8" opacity=".85"/><rect x="730" y="35" width="2" height="2" fill="#3f74c8"/><rect x="731" y="36" width="2" height="2" fill="#fff" opacity=".9"/><rect x="730" y="35" width="2" height="2" fill="#3f74c8" opacity=".85"/><rect x="730" y="39" width="2" height="2" fill="#3f74c8"/><rect x="731" y="40" width="2" height="2" fill="#fff" opacity=".9"/><rect x="730" y="39" width="2" height="2" fill="#3f74c8" opacity=".85"/><rect x="730" y="43" width="2" height="2" fill="#3f74c8"/><rect x="731" y="44" width="2" height="2" fill="#fff" opacity=".9"/><rect x="730" y="43" width="2" height="2" fill="#3f74c8" opacity=".85"/><rect x="739.500" y="32.500" width="13" height="13" fill="#d8d8d8" stroke="#222" stroke-width="1.400"/><rect x="742.500" y="34.500" width="5" height="3" fill="#fff" stroke="#222"/><rect x="744.500" y="40.500" width="6" height="3" fill="#fff" stroke="#222"/><path d="M760.500 38h6l-3 3.500z" fill="#111"/>
<g transform="translate(366,6)"><path d="M0 0h12l4 4v12h-16z" fill="#e6d6a0"/><path d="M12 0v4h4z" fill="#fff"/><path d="M12 0l4 4" stroke="#c9b98a" stroke-width=".8"/><path d="M.5 0v15.500h15.500" fill="none" stroke="#c4b27e"/><rect x="2.500" y="3.500" width="11" height="9" fill="#fdf6c8" stroke="#222"/><rect x="6.500" y="5.500" width="5" height="5" fill="#fff" stroke="#222"/><circle cx="2.800" cy="8" r="1.500" fill="#fff" stroke="#222"/><path d="M4.300 8h2.200" stroke="#222"/></g>
<path d="M536 10.500l7 7M543 10.500l-7 7" stroke="#111" stroke-width="1.700"/>
<rect x="336" y="52" width="770" height="2" fill="#73737b"/>
</svg>
<div class="t" style="left:397px;top:244px;font-size:12px;font-weight:bold;letter-spacing:-0.175px">Control and Air Distribu...</div>
<div class="a" style="left:354px;top:297px;width:411px;height:111px;border:1px solid #000"></div>
<svg class="a" style="left:354px;top:297px" width="345" height="20" viewBox="0 0 345 20"><path d="M0 18.500H335L343.5 13.500V0" fill="none" stroke="#000"/></svg>
<div class="t" style="left:361.5px;top:298px;font-size:10.670px;letter-spacing:0.108px"><b>ibd</b></div>
<div class="t" style="left:382.3px;top:298px;font-size:10.670px;letter-spacing:-0.064px">[Block]</div>
<div class="t" style="left:418px;top:298px;font-size:10.670px;letter-spacing:-0.187px">Climate Control Unit</div>
<div class="t" style="left:512.7px;top:298px;font-size:10.670px;letter-spacing:0.103px">[ Control and Air Distribution Groups ]</div><div class="a" style="left:375px;top:340px;width:331px;height:48px;background:#fbfbfb;border:1px solid #7c7c7c"></div>
<div class="a" style="left:377px;top:342px;width:25px;height:22px;background:#e8eded;border-right:1px solid #c9cccc"></div>
<div class="a" style="left:378px;top:364px;width:325px;height:21px;border:1px solid #e6c86e;border-radius:2px;background:linear-gradient(#fffbe6 0,#fff0b0 46%,#ffd648 50%,#ffd34a 70%,#ffe27c 100%)"></div>
<div class="t" style="left:409px;top:346px;font-size:12px;letter-spacing:-0.169px">Create Part Property Symbol</div>
<div class="t" style="left:409px;top:368px;font-size:12px;letter-spacing:-0.123px">Create Part Property Symbol and Display All Ports</div>
<svg class="a" style="left:683px;top:372px" width="16" height="24" viewBox="0 0 16 24"><path d="M1.500 1.500v16l3.700-3.600 2.900 6.700 2.600-1.100-2.900-6.500h5z" fill="#fff" stroke="#000" stroke-width="1"/></svg>
<!-- ============ RESULT ============ -->
<div class="a" style="left:359px;top:451px;width:411px;height:111px;border:1px solid #000"></div>
<svg class="a" style="left:359px;top:451px" width="345" height="20" viewBox="0 0 345 20"><path d="M0 18.500H335L343.5 13.500V0" fill="none" stroke="#000"/></svg>
<div class="t" style="left:366.5px;top:452px;font-size:10.670px;letter-spacing:0.108px"><b>ibd</b></div>
<div class="t" style="left:387.3px;top:452px;font-size:10.670px;letter-spacing:-0.064px">[Block]</div>
<div class="t" style="left:423px;top:452px;font-size:10.670px;letter-spacing:-0.187px">Climate Control Unit</div>
<div class="t" style="left:517.7px;top:452px;font-size:10.670px;letter-spacing:0.103px">[ Control and Air Distribution Groups ]</div><div class="a" style="left:455px;top:499px;width:84px;height:36px;background:#b9b9b9"></div>
<div class="a" style="left:452px;top:496px;width:84px;height:36px;border:1px solid #8b8468;background:linear-gradient(120deg,#fdf0c4 0,#fdf4d4 40%,#fffdf4 100%)"></div>
<div class="t" style="left:452px;top:497px;width:84px;text-align:center;font-weight:bold;font-size:12px;letter-spacing:-0.211px">: Sensors</div>
<svg class="a" style="left:376px;top:499px" width="67" height="14" viewBox="0 0 67 14" shape-rendering="crispEdges"><rect x=".5" y=".5" width="66" height="13" fill="none" stroke="#6e6e6e" stroke-dasharray="2 2"/></svg><div class="t" style="left:377px;top:499px;height:13px;line-height:13px;font-size:10.670px;letter-spacing:-0.01px">ElectricityPort</div>
<svg class="a" style="left:545px;top:499px" width="107" height="14" viewBox="0 0 107 14" shape-rendering="crispEdges"><rect x=".5" y=".5" width="106" height="13" fill="none" stroke="#6e6e6e" stroke-dasharray="2 2"/></svg><div class="t" style="left:546px;top:499px;height:13px;line-height:13px;font-size:10.670px;letter-spacing:0.141px">AutomotiveBusesPort</div>
<svg class="a" style="left:440px;top:500px" width="110" height="30" viewBox="440 500 110 30"><rect x="446" y="508" width="14" height="14" fill="#4646f6"/><path d="M453 511.500l5.500 3.200-5.500 3.200z" fill="#c4d0ff"/><rect x="445.500" y="507.500" width="9" height="8" fill="#fff" stroke="#000"/><rect x="528" y="508" width="14" height="14" fill="#0c4444"/><path d="M535 511.500l5.500 3.200-5.500 3.200z" fill="#c8e8e0"/><rect x="527.500" y="507.500" width="9" height="8" fill="#fff" stroke="#000"/></svg>
<div class="t" style="left:446px;top:507px;width:9px;height:9px;line-height:9px;font-size:8px;font-weight:bold;text-align:center;font-family:'Liberation Serif',serif">M</div>
<div class="t" style="left:528px;top:507px;width:9px;height:9px;line-height:9px;font-size:8px;font-weight:bold;text-align:center;font-family:'Liberation Serif',serif">M</div>
<!-- ============ OVERLAY ============ -->
<svg class="a" style="left:0;top:0" width="770" height="564" viewBox="0 0 770 564">
<g fill="none" stroke="#fa6912" stroke-width="2">
<rect x="90" y="369" width="92" height="19" rx="9.500"/>
<rect x="370" y="333.500" width="345" height="63" rx="11"/>
<rect x="368" y="488.500" width="295" height="52" rx="11"/>
</g>
<g fill="none" stroke="#fa6912" stroke-width="2.200" stroke-dasharray="2.100 1.900">
<path d="M183.6 373.3C195.4 359.4 236.3 312.2 254.4 290.0C272.5 267.8 279.6 258.3 292.0 240.0C304.4 221.7 318.8 195.8 328.5 180.0C338.2 164.2 345.1 154.0 350.4 145.0C355.6 136.0 358.4 129.2 360.0 126.0"/>
<path d="M369.800 124V338"/>
<path d="M388 118.700L708 333.400"/>
<path d="M379.400 399L369.800 489"/>
<path d="M707.500 398L662.500 492"/>
</g>
<path d="M366.500 116.500L356.500 123L365 128z" fill="#fa6912"/>
<path d="M365 110.500h9.500M369.500 106v9.500" stroke="#000" stroke-width="1.300" fill="none"/>
<rect x="371" y="113.500" width="12.500" height="9" fill="#fdf5c6" stroke="#7a7a6a" stroke-width="1"/>
<path d="M371.500 112.500v5l1.500 -1.500" stroke="#333" fill="none" stroke-width="1.200"/>
</svg>
<div class="t" style="left:376px;top:113px;height:10px;line-height:10px;font-size:8px;font-weight:bold;color:#6a6a6a">P</div>
<div class="t or" style="left:264px;top:204.500px;font-size:16.400px">Drag</div>
<div class="t or" style="left:702px;top:309px;font-size:16.400px">Select</div>
<div class="t or" style="left:679px;top:477.500px;font-size:16.400px">Result</div>
</body></html>
